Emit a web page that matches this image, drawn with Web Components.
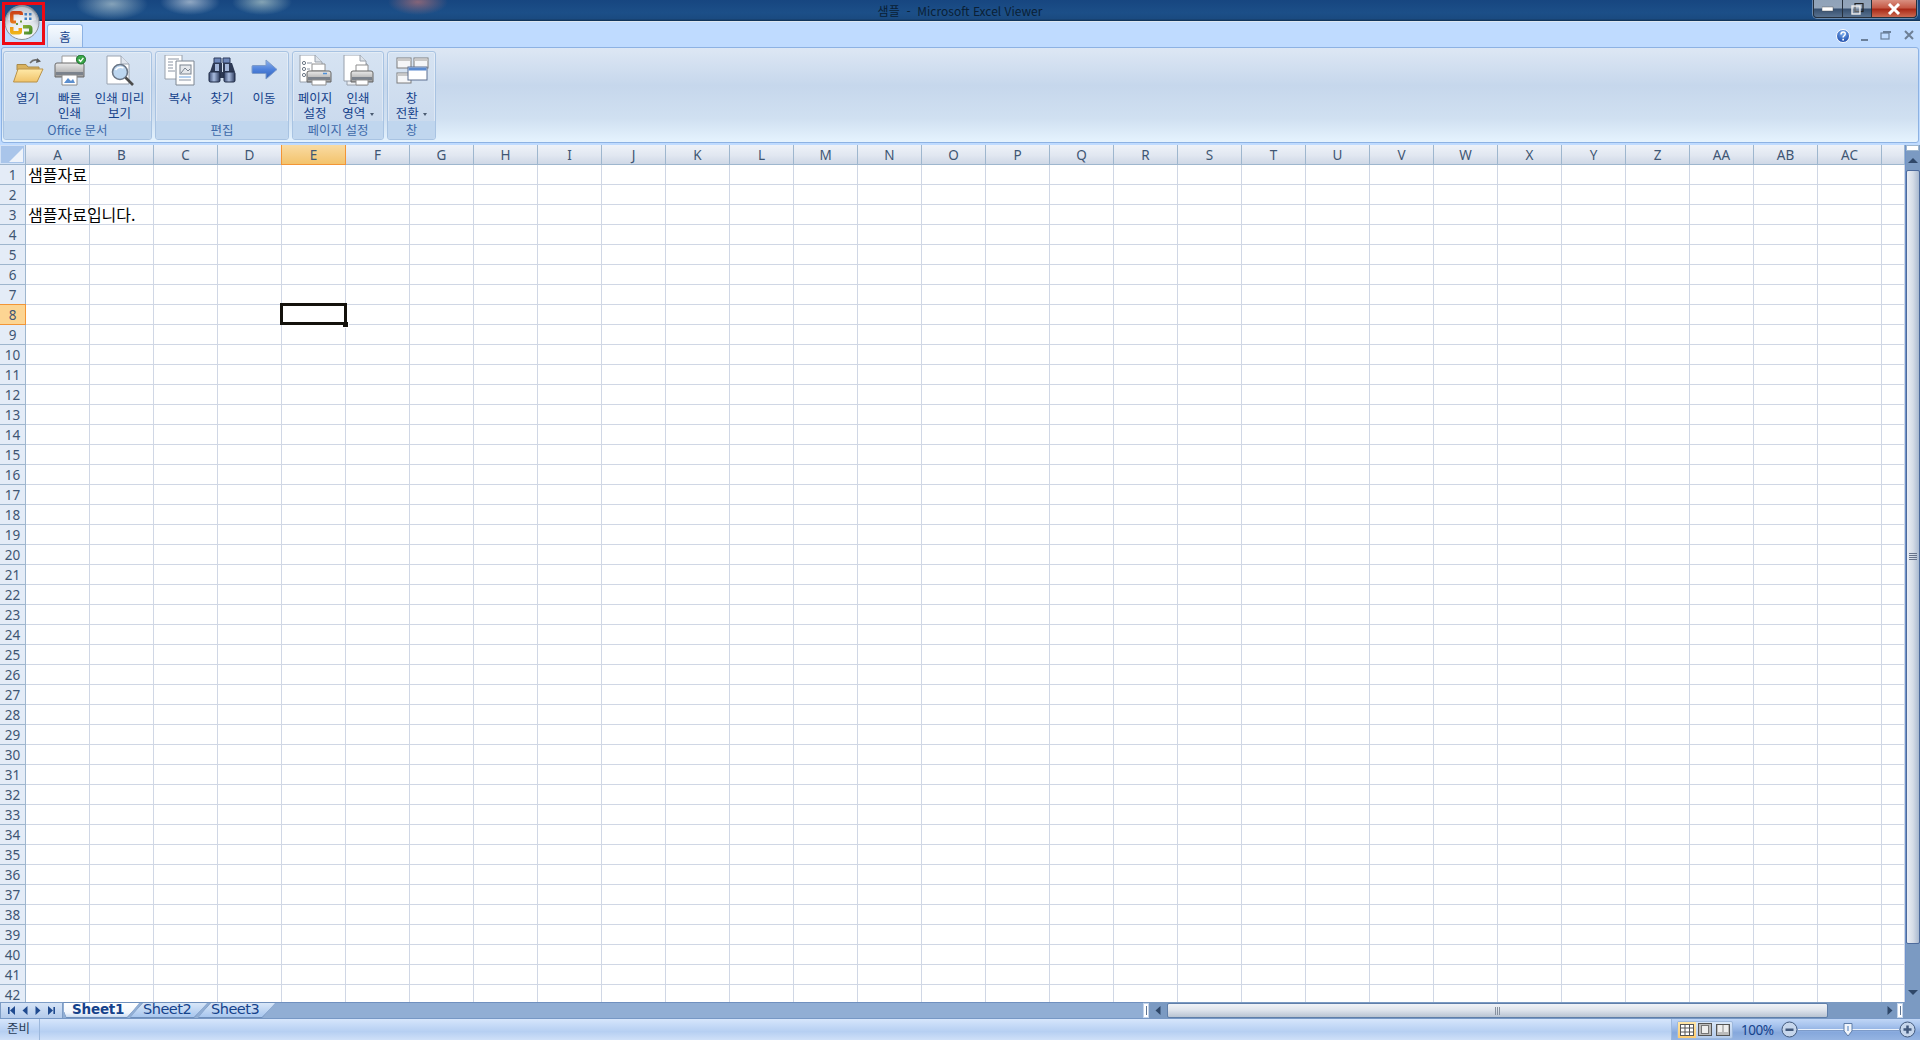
<!DOCTYPE html>
<html lang="ko">
<head>
<meta charset="utf-8">
<title>샘플 - Microsoft Excel Viewer</title>
<style>
  html, body { margin: 0; height: 100%; overflow: hidden; }
  body {
    display: flex;
    flex-direction: column;
    height: 1040px;
    position: relative;
    background: #bfdbff;
    font-family: "Noto Sans CJK KR", "Noto Sans", sans-serif;
  }
</style>
</head>
<body>
  <xl-titlebar>샘플&nbsp; -&nbsp; Microsoft Excel Viewer</xl-titlebar>
  <xl-tabstrip>홈</xl-tabstrip>
  <xl-ribbon>
    <xl-group label="Office 문서" width="149">
      <xl-button icon="open" width="42">열기</xl-button>
      <xl-button icon="quickprint" width="42">빠른<br>인쇄</xl-button>
      <xl-button icon="preview" width="58">인쇄 미리<br>보기</xl-button>
    </xl-group>
    <xl-group label="편집" width="134">
      <xl-button icon="copy" width="44">복사</xl-button>
      <xl-button icon="find" width="40">찾기</xl-button>
      <xl-button icon="goto" width="44">이동</xl-button>
    </xl-group>
    <xl-group label="페이지 설정" width="92">
      <xl-button icon="pagesetup" width="43">페이지<br>설정</xl-button>
      <xl-button icon="printarea" width="43" style="margin-right:3px">인쇄<br>영역 <xl-caret></xl-caret></xl-button>
    </xl-group>
    <xl-group label="창" width="49">
      <xl-button icon="windows" width="45">창<br>전환 <xl-caret></xl-caret></xl-button>
    </xl-group>
  </xl-ribbon>
  <xl-sheet></xl-sheet>
  <xl-sheetbar>
    <xl-sheettab active>Sheet1</xl-sheettab>
    <xl-sheettab>Sheet2</xl-sheettab>
    <xl-sheettab>Sheet3</xl-sheettab>
  </xl-sheetbar>
  <xl-statusbar>준비</xl-statusbar>
  <xl-officebutton></xl-officebutton>

<script>
const icons = {
  open: `
    <path d="M7 9.5 h9 l2 2.5 h11 v3 H7z" fill="#d9b25f" stroke="#a98a4a"/>
    <path d="M3.500 27 L8 14 H33 L27 27z" fill="url(#fold)" stroke="#b8924a"/>
    <path d="M20 8 q4 -5 9 -2" fill="none" stroke="#6f6f6f" stroke-width="1.6"/>
    <path d="M27 3 l4 3.5 -5 1.5z" fill="#5c5c5c"/>`,
  quickprint: `
    <path d="M10 1 h15 v8 H10z" fill="#fff" stroke="#9a9a9a"/>
    <path d="M3 10 q0 -2 2 -2 h25 q2 0 2 2 v12 H3z" fill="url(#metal)" stroke="#6a6a6a"/>
    <rect x="4" y="17" width="27" height="3" fill="#7b828c"/>
    <path d="M10 20 h15 v10 H10z" fill="#fff" stroke="#8a8a8a"/>
    <path d="M12 28 l4 -5 3 3 2 -2 2 4z" fill="#5c8fcf"/>
    <circle cx="29" cy="4.5" r="4.5" fill="#3aa84a" stroke="#1d6d2c"/>
    <path d="M26.8 4.5 l1.8 2 2.8 -3.6" fill="none" stroke="#fff" stroke-width="1.3"/>`,
  preview: `
    <path d="M5 1 h14 l8 8 v20 H5z" fill="#fff" stroke="#9aa3b0"/>
    <path d="M19 1 v8 h8" fill="#dfe5ee" stroke="#9aa3b0"/>
    <circle cx="18" cy="17" r="7.5" fill="#bcd6f0" stroke="#6a7686" stroke-width="1.6"/>
    <path d="M13.5 15 q3 -4 8 -2" fill="none" stroke="#fff" stroke-width="1.5"/>
    <path d="M23.5 22.5 L31 30" stroke="#4c4c4c" stroke-width="2.6"/>`,
  copy: `
    <path d="M3 0 h17 v24 H3z" fill="#fff" stroke="#98a0ab"/>
    <path d="M6 4 h11 M6 7 h5 M6 10 h5 M6 13 h5 M6 16 h7" stroke="#8a94a3"/>
    <path d="M14 6 h18 v24 H14z" fill="#fdfdfd" stroke="#7d8692"/>
    <rect x="18" y="10" width="11" height="9" fill="#e5e8ec" stroke="#7a8490"/>
    <path d="M19 18 l4 -5 3 3 2 -2" fill="none" stroke="#7a8490"/>
    <path d="M17 22 h12" stroke="#6ba0dc"/><path d="M17 25 h12" stroke="#8a94a3"/>`,
  find: `
    <path d="M10 3 h7 v5 h-7z M19 3 h7 v5 h-7z" fill="#6d86b8" stroke="#2c3a5c"/>
    <path d="M9 8 h9 v9 h1 v-9 h9 l3 9 H6z" fill="#2e3a55"/>
    <rect x="11" y="9" width="4" height="7" fill="#a3b6d9"/><rect x="21" y="9" width="4" height="7" fill="#a3b6d9"/>
    <path d="M15 17 h6 v6 h-6z" fill="#2e3a55"/>
    <rect x="5" y="17" width="11" height="10" rx="1.5" fill="url(#barrel)" stroke="#1f2a44"/>
    <rect x="20" y="17" width="11" height="10" rx="1.5" fill="url(#barrel)" stroke="#1f2a44"/>`,
  goto: `
    <path d="M7 10.500 H20 V5 L31 14.500 20 24 V18.500 H7 q-1 0 -1 -1 V11.500 q0 -1 1 -1z" fill="url(#arrow)" stroke="#7d9bc9"/>`,
  pagesetup: `
    <path d="M3 0 h15 l7 7 v20 H3z" fill="#fff" stroke="#98a0ab"/>
    <path d="M18 0 v7 h7" fill="#dde3ea" stroke="#98a0ab"/>
    <g fill="#fff" stroke="#6f7a88"><circle cx="7" cy="8" r="1.6"/><circle cx="7" cy="14" r="1.6"/><circle cx="7" cy="20" r="1.6"/></g>
    <path d="M10 8 h5 M10 14 h3 M10 20 h3" stroke="#8a94a3"/>
    <path d="M15 9 h13 v7 H15z" fill="#fff" stroke="#8f8f8f"/>
    <path d="M10 18 q0 -2 2 -2 h20 q2 0 2 2 v9 H10z" fill="url(#metal)" stroke="#666"/>
    <rect x="11" y="22" width="22" height="3" fill="#7b828c"/>
    <path d="M15 25 h14 v5 H15z" fill="#fff" stroke="#8f8f8f"/>
    <path d="M26 18.500 h4" stroke="#4d8fd8" stroke-width="1.4"/>`,
  printarea: `
    <path d="M7 3 h14 l6 6 v21 H7z" fill="#eceff3" stroke="#98a0ab"/>
    <path d="M4 0 h16 l6 6 v20 H4z" fill="#fff" stroke="#98a0ab"/>
    <path d="M20 0 v6 h6" fill="#dde3ea" stroke="#98a0ab"/>
    <path d="M16 10 h12 v7 H16z" fill="#fff" stroke="#8f8f8f"/>
    <path d="M11 18 q0 -2 2 -2 h18 q2 0 2 2 v9 H11z" fill="url(#metal)" stroke="#666"/>
    <rect x="12" y="22" width="20" height="3" fill="#7b828c"/>
    <path d="M16 25 h12 v5 H16z" fill="#fff" stroke="#8f8f8f"/>`,
  windows: `
    <g transform="translate(2 1)">
      <g fill="#f5f6f8" stroke="#7d7d7d">
        <rect x="1" y="2" width="14" height="10"/><rect x="18" y="2" width="14" height="10"/>
        <rect x="1" y="17" width="14" height="10"/>
      </g>
      <g fill="#c9c9c9"><rect x="1.500" y="2.500" width="13" height="2.500"/><rect x="18.500" y="2.500" width="13" height="2.500"/><rect x="1.500" y="17.500" width="13" height="2.500"/></g>
      <rect x="12" y="11" width="19" height="13" fill="#fff" stroke="#5d6f8f"/>
      <rect x="12.500" y="11.500" width="18" height="3" fill="#5a8ad0"/>
    </g>`
};

const iconDefs = `
  <defs>
    <linearGradient id="fold" x1="0" y1="0" x2="0" y2="1"><stop offset="0" stop-color="#ffe9a8"/><stop offset="1" stop-color="#f0c36a"/></linearGradient>
    <linearGradient id="metal" x1="0" y1="0" x2="0" y2="1"><stop offset="0" stop-color="#eaeaea"/><stop offset="1" stop-color="#9a9a9a"/></linearGradient>
    <linearGradient id="barrel" x1="0" y1="0" x2="1" y2="0"><stop offset="0" stop-color="#3a4a70"/><stop offset=".45" stop-color="#a9bcdf"/><stop offset="1" stop-color="#2c3a5c"/></linearGradient>
    <linearGradient id="arrow" x1="0" y1="0" x2="0" y2="1"><stop offset="0" stop-color="#8fb2ea"/><stop offset=".5" stop-color="#4f82dc"/><stop offset="1" stop-color="#2f5fb8"/></linearGradient>
  </defs>`;

class XlTitlebar extends HTMLElement {
  constructor() {
    super();
    this.attachShadow({ mode: "open" });
    this.shadowRoot.innerHTML = `
      <style>
        :host {
          display: flex;
          align-items: flex-start;
          justify-content: center;
          height: 22px;
          box-sizing: border-box;
          border-bottom: 1px solid #dce6f0;
          position: relative;
          font-size: 12px;
          line-height: 22px;
          color: #0a1f35;
          background:
            radial-gradient(ellipse 36px 16px at 112px 4px, rgba(205,222,222,.6), transparent),
            radial-gradient(ellipse 30px 13px at 190px 2px, rgba(225,232,238,.6), transparent),
            radial-gradient(ellipse 30px 13px at 262px 2px, rgba(205,225,215,.6), transparent),
            radial-gradient(ellipse 30px 13px at 418px 2px, rgba(205,120,115,.6), transparent),
            linear-gradient(#174680, #1c4f88 60%, #1a4a80 90%, #0f2f50);
        }
        .controls {
          position: absolute;
          top: 0;
          right: 3px;
          display: flex;
          height: 18px;
          width: 104px;
          box-sizing: border-box;
          border: 1px solid #26303c;
          border-top: 0;
          border-radius: 0 0 4px 4px;
          overflow: hidden;
          box-shadow: 0 0 0 1px rgba(255,255,255,.35);
        }
        .controls div { display: flex; align-items: center; justify-content: center; }
        .min, .max {
          width: 28px;
          background: linear-gradient(#8fa2b8, #93a5ba 45%, #37506f 55%, #59728f);
          border-right: 1px solid #26303c;
        }
        .close { flex: 1; background: linear-gradient(#d98f80, #c65a47 45%, #a92a18 55%, #cc6a52); }
      </style>
      <slot></slot>
      <div class="controls">
        <div class="min"><svg width="12" height="6"><rect width="11" height="4" y="1" fill="#fff" stroke="#444" stroke-width=".4"/></svg></div>
        <div class="max"><svg width="13" height="12"><rect x="4" y=".5" width="8" height="8" fill="none" stroke="#222" stroke-width="1.2"/><rect x="1" y="3" width="8" height="8" fill="rgba(255,255,255,.3)" stroke="#eee" stroke-width="1.4"/></svg></div>
        <div class="close"><svg width="14" height="12"><path d="M2 1 L12 11 M12 1 L2 11" stroke="#fff" stroke-width="3"/></svg></div>
      </div>`;
  }
}

class XlTabstrip extends HTMLElement {
  constructor() {
    super();
    this.attachShadow({ mode: "open" });
    this.shadowRoot.innerHTML = `
      <style>
        :host {
          display: flex;
          height: 25px;
          padding-left: 47px;
          box-sizing: border-box;
          position: relative;
          background: #bfdbff;
        }
        .tab {
          width: 36px;
          height: 23px;
          margin-top: 2px;
          box-sizing: border-box;
          border: 1px solid #8db2e3;
          border-bottom: 0;
          border-radius: 3px 3px 0 0;
          background: linear-gradient(#f7fbff, #dae7f6);
          color: #15428b;
          font-size: 12.5px;
          line-height: 23px;
          text-align: center;
        }
        .ctl { position: absolute; top: 6px; }
      </style>
      <div class="tab"><slot></slot></div>
      <svg class="ctl" style="left:1835px" width="16" height="16">
        <defs><radialGradient id="h" cx=".5" cy=".3" r=".7"><stop offset="0" stop-color="#7fb2f0"/><stop offset="1" stop-color="#1746a8"/></radialGradient></defs>
        <circle cx="8" cy="8" r="6.500" fill="url(#h)" stroke="#fff"/>
        <path d="M6 6.500 q0 -2.500 2.200 -2.500 q2.300 0 2 2.200 q-.2 1 -1.200 1.600 q-.9 .5 -.9 1.700" fill="none" stroke="#fff" stroke-width="1.500"/>
        <rect x="7.300" y="10.800" width="1.700" height="1.700" fill="#fff"/>
      </svg>
      <svg class="ctl" style="left:1860px" width="10" height="16"><rect x="1" y="11" width="7" height="2" fill="#6a7f99"/></svg>
      <svg class="ctl" style="left:1880px" width="12" height="16"><rect x="1" y="5" width="8" height="6" fill="none" stroke="#6a7f99" stroke-width="1.200"/><rect x="3" y="3" width="8" height="2" fill="#6a7f99"/></svg>
      <svg class="ctl" style="left:1903px" width="12" height="16"><path d="M2 3 L10 11 M10 3 L2 11" stroke="#6d7f95" stroke-width="2"/></svg>`;
  }
}

class XlRibbon extends HTMLElement {
  constructor() {
    super();
    this.attachShadow({ mode: "open" });
    this.shadowRoot.innerHTML = `
      <style>
        :host {
          display: block;
          height: 98px;
          background: #bfdbff;
          padding: 0 1px 2px 1px;
          box-sizing: border-box;
        }
        .panel {
          display: flex;
          gap: 3px;
          height: 96px;
          box-sizing: border-box;
          padding: 3px 2px 2px 1px;
          border: 1px solid #8db2e3;
          border-radius: 3px;
          background: linear-gradient(#dde7f4, #c6d7ec 40%, #d0e0f1 75%, #e5f3fe);
        }
      </style>
      <div class="panel"><slot></slot></div>`;
  }
}

class XlGroup extends HTMLElement {
  connectedCallback() {
    if (this.shadowRoot) return;
    this.attachShadow({ mode: "open" });
    const width = this.getAttribute("width");
    this.shadowRoot.innerHTML = `
      <style>
        :host {
          display: flex;
          flex-direction: column;
          width: ${width}px;
          box-sizing: border-box;
          border: 1px solid #a8c3e2;
          border-radius: 3px;
          box-shadow: inset 0 0 0 1px rgba(255,255,255,.35);
          background: linear-gradient(#d6e3f2, #c8d8ec);
          overflow: hidden;
        }
        .body { display: flex; justify-content: center; flex: 1; padding-top: 3px; }
        .label {
          height: 18px;
          background: #c0d6ee;
          color: #3e6aaa;
          font-size: 12.5px;
          line-height: 18px;
          text-align: center;
          white-space: nowrap;
        }
      </style>
      <div class="body"><slot></slot></div>
      <div class="label">${this.getAttribute("label")}</div>`;
  }
}

class XlButton extends HTMLElement {
  connectedCallback() {
    if (this.shadowRoot) return;
    this.attachShadow({ mode: "open" });
    const width = this.getAttribute("width");
    const icon = this.getAttribute("icon");
    this.shadowRoot.innerHTML = `
      <style>
        :host {
          display: flex;
          flex-direction: column;
          align-items: center;
          width: ${width}px;
          color: #15428b;
          font-size: 12.5px;
          line-height: 15px;
          text-align: center;
          white-space: nowrap;
        }
        svg { display: block; margin-bottom: 4px; }
      </style>
      <svg width="36" height="31" viewBox="0 0 36 31">${iconDefs}${icons[icon]}</svg>
      <div><slot></slot></div>`;
  }
}

class XlCaret extends HTMLElement {
  constructor() {
    super();
    this.attachShadow({ mode: "open" });
    this.shadowRoot.innerHTML = `
      <style>
        :host {
          display: inline-block;
          width: 0;
          height: 0;
          margin-left: 1px;
          vertical-align: middle;
          border: 2.500px solid transparent;
          border-top: 3px solid #4a5a70;
          border-bottom: 0;
        }
      </style>`;
  }
}

class XlSheet extends HTMLElement {
  colName(i) {
    const letters = "ABCDEFGHIJKLMNOPQRSTUVWXYZ";
    return i < 26 ? letters[i] : "A" + letters[i - 26];
  }

  connectedCallback() {
    if (this.shadowRoot) return;
    this.attachShadow({ mode: "open" });
    const data = { "0,1": "샘플자료", "0,3": "샘플자료입니다." };
    let head = `<div class="corner"><i></i></div>`;
    for (let c = 0; c < 29; c++) {
      head += `<div class="ch${c === 4 ? " on" : ""}">${this.colName(c)}</div>`;
    }
    head += `<div class="ch rest"></div>`;
    let rows = "";
    for (let r = 1; r <= 42; r++) {
      rows += `<div class="rh${r === 8 ? " on" : ""}">${r}</div>`;
      for (let c = 0; c < 30; c++) {
        const selected = c === 4 && r === 8;
        rows += `<div class="cell${selected ? " sel" : ""}">${data[c + "," + r] || ""}</div>`;
      }
    }
    this.shadowRoot.innerHTML = `
      <style>
        :host {
          display: flex;
          height: 857px;
          overflow: hidden;
          background: #fff;
        }
        .grid {
          flex: 1;
          display: grid;
          grid-template-columns: 26px repeat(29, 64px) 1fr;
          grid-auto-rows: 20px;
          overflow: hidden;
          height: 857px;
          font-size: 13.5px;
        }
        .corner {
          background: #a9c5ea;
          border-right: 1px solid #9eb6ce;
          border-bottom: 1px solid #9eb6ce;
          box-shadow: inset 0 0 0 1px #d3e2f6;
          position: relative;
        }
        .corner i {
          position: absolute;
          right: 2px;
          bottom: 2px;
          border: 7px solid transparent;
          border-right-color: #eef3fa;
          border-bottom-color: #eef3fa;
        }
        .ch, .rh {
          display: flex;
          align-items: center;
          justify-content: center;
          box-sizing: border-box;
          color: #3f5673;
          font-family: "Noto Sans", sans-serif;
        }
        .ch {
          background: linear-gradient(#eef2f8, #e1e7f1 55%, #cfd8e6);
          border-right: 1px solid #9eb6ce;
          border-bottom: 1px solid #9eb6ce;
        }
        .ch.on {
          background: linear-gradient(#f9dba3, #f3c36c);
          border-bottom-color: #f29536;
          border-right-color: #f29536;
          box-shadow: -1px 0 0 #f29536;
        }
        .rh {
          background: #e4ecf7;
          border-right: 1px solid #9eb6ce;
          border-bottom: 1px solid #9eb6ce;
        }
        .rh.on {
          background: #fcd593;
          border-right-color: #f29536;
          border-bottom-color: #f29536;
          box-shadow: 0 -1px 0 #f29536;
        }
        .cell {
          box-sizing: border-box;
          border-right: 1px solid #d0d7e5;
          border-bottom: 1px solid #d0d7e5;
          padding-left: 2px;
          font: 16px/19px "Noto Sans CJK KR", sans-serif;
          color: #000;
          white-space: nowrap;
        }
        .cell.sel { position: relative; }
        .cell.sel::before {
          content: "";
          position: absolute;
          left: -2px;
          top: -2px;
          width: 67px;
          height: 22px;
          box-sizing: border-box;
          border: 3px solid #14120c;
        }
        .cell.sel::after {
          content: "";
          position: absolute;
          left: 61px;
          top: 17px;
          width: 5px;
          height: 5px;
          background: #14120c;
          border: 1px solid #fff;
          border-top: 0;
          border-left: 0;
        }
        .vbar {
          width: 15px;
          flex: none;
          display: flex;
          flex-direction: column;
          align-items: stretch;
          background: #7b9ac2;
          border-left: 1px solid #6f93cc;
          box-sizing: border-box;
        }
        .split { height: 6px; background: #fff; border: 1px solid #9eb6ce; box-sizing: border-box; margin-right: 1px; }
        .up, .down { display: flex; align-items: center; justify-content: center; }
        .up { height: 19px; }
        .thumb {
          height: 774px;
          display: flex;
          align-items: center;
          justify-content: center;
          box-sizing: border-box;
          border: 1px solid #4e6b9c;
          border-radius: 2px;
          background: linear-gradient(90deg, #eaeef5, #d5dce7 50%, #a9b9d0);
        }
        .grip { width: 8px; height: 8px; background: repeating-linear-gradient(#66728a 0 1px, transparent 1px 2px); }
        .down { flex: 1; align-items: flex-end; padding-bottom: 6px; }
      </style>
      <div class="grid">${head}${rows}</div>
      <div class="vbar">
        <div class="split"></div>
        <div class="up"><svg width="10" height="6"><path d="M5 0 L10 5 H0z" fill="#2f4768"/></svg></div>
        <div class="thumb"><div class="grip"></div></div>
        <div class="down"><svg width="10" height="6"><path d="M0 0 H10 L5 5z" fill="#2f4768"/></svg></div>
      </div>`;
  }
}

class XlSheetbar extends HTMLElement {
  constructor() {
    super();
    this.attachShadow({ mode: "open" });
    this.shadowRoot.innerHTML = `
      <style>
        :host {
          display: flex;
          height: 16px;
          background: #91aed4;
          box-shadow: inset 0 1px 0 #7090bf;
          position: relative;
        }
        .nav {
          width: 63px;
          flex: none;
          box-sizing: border-box;
          border: 1px solid #7d9cc5;
          border-bottom: 0;
          background: linear-gradient(#d6e4f7, #b4cbeb);
          display: flex;
          align-items: center;
          justify-content: space-around;
          padding: 0 4px;
        }
        .tabs { display: flex; margin-left: 1px; }
        .spacer { flex: 1; }
        .hs { display: flex; height: 16px; flex: none; background: #7b9ac2; width: 777px; margin-left: 0; }
        .handle {
          width: 6px;
          height: 15px;
          flex: none;
          margin-top: 1px;
          background: #fff;
          border: 1px solid #c4d4ea;
          box-sizing: border-box;
          display: flex;
          justify-content: center;
        }
        .handle i { width: 1px; margin: 2px 0; background: #5f7694; }
        .arrow { display: flex; align-items: center; justify-content: center; flex: none; }
        .thumb {
          width: 661px;
          flex: none;
          margin-top: 1px;
          box-sizing: border-box;
          border: 1px solid #5f7ea9;
          border-radius: 2px;
          background: linear-gradient(#f0f3f7, #dfe4ec 45%, #b8c3d2);
          display: flex;
          align-items: center;
          justify-content: center;
        }
        .grip { width: 6px; height: 8px; background: repeating-linear-gradient(90deg, #87919f 0 1px, transparent 1px 2px); }
      </style>
      <div class="nav">
        <svg width="8" height="9"><rect y="1" width="1.600" height="7" fill="#1f4a8f"/><path d="M7 0 V9 L2 4.500z" fill="#1f4a8f"/></svg>
        <svg width="6" height="9"><path d="M5.500 0 V9 L.5 4.500z" fill="#1f4a8f"/></svg>
        <svg width="6" height="9"><path d="M.5 0 V9 L5.500 4.500z" fill="#1f4a8f"/></svg>
        <svg width="8" height="9"><path d="M1 0 V9 L6 4.500z" fill="#1f4a8f"/><rect x="6.400" y="1" width="1.600" height="7" fill="#1f4a8f"/></svg>
      </div>
      <div class="tabs"><slot></slot></div>
      <div class="spacer"></div>
      <div class="hs">
        <div class="handle"><i></i></div>
        <div class="arrow" style="width:18px"><svg width="6" height="9"><path d="M5.500 0 V9 L.5 4.500z" fill="#2f4768"/></svg></div>
        <div class="thumb"><div class="grip"></div></div>
        <div class="spacer"></div>
        <div class="arrow" style="width:14px"><svg width="6" height="9"><path d="M.5 0 V9 L5.500 4.500z" fill="#2f4768"/></svg></div>
        <div class="handle" style="margin-right:17px"><i></i></div>
      </div>`;
  }
}

class XlSheettab extends HTMLElement {
  connectedCallback() {
    if (this.shadowRoot) return;
    this.attachShadow({ mode: "open" });
    const active = this.hasAttribute("active");
    const shape = active
      ? "polygon(0 0, 100% 0, 83% 100%, 3% 100%, 0 60%)"
      : "polygon(13px 0, 100% 0, calc(100% - 14px) 100%, 0 100%)";
    this.shadowRoot.innerHTML = `
      <style>
        :host {
          display: block;
          box-sizing: border-box;
          height: 16px;
          margin-left: ${active ? "0" : "-10px"};
          width: ${active ? "76px" : "78px"};
          padding-top: 1px;
          ${active ? "position: relative; z-index: 1;" : ""}
          background: #6f8fbb;
          clip-path: ${shape};
        }
        .in {
          height: 14px;
          padding-left: ${active ? "8px" : "13px"};
          box-sizing: border-box;
          clip-path: ${shape};
          background: ${active ? "linear-gradient(#fff, #f2f6fc 70%, #c9dbf3)" : "linear-gradient(#d9e7f8, #a8c6ee)"};
          color: #15428b;
          font: ${active ? "bold 13.5px" : "14.5px"}/12px "DejaVu Sans", sans-serif;
          ${active ? "letter-spacing: -.2px;" : "letter-spacing: -.5px;"}
          white-space: nowrap;
        }
      </style>
      <div class="in"><slot></slot></div>`;
  }
}

class XlStatusbar extends HTMLElement {
  constructor() {
    super();
    this.attachShadow({ mode: "open" });
    this.shadowRoot.innerHTML = `
      <style>
        :host {
          display: flex;
          height: 22px;
          box-sizing: border-box;
          border-top: 1px solid #7798c5;
          background: linear-gradient(#d7e6fb, #c8dcf8 25%, #b6cff2 60%, #cfe0f8);
          color: #15428b;
          font-size: 12.5px;
          line-height: 18px;
        }
        .left {
          width: 40px;
          flex: none;
          box-sizing: border-box;
          padding-left: 7px;
          border-right: 1px solid #9db8dc;
          color: #2a3d58;
        }
        .mid { flex: 1; }
        .right {
          width: 249px;
          flex: none;
          display: flex;
          align-items: center;
          box-sizing: border-box;
          padding-left: 5px;
          border-left: 1px solid #9db8dc;
          background: linear-gradient(#c0d6f6, #a8c4ee 30%, #86a8dc 65%, #95b4e2);
        }
        .views {
          display: flex;
          width: 56px;
          height: 18px;
          box-sizing: border-box;
          border: 1px solid #9db8dc;
          border-radius: 2px;
          background: linear-gradient(#d8e6f8, #b4cbec);
        }
        .views span { flex: 1; display: flex; align-items: center; justify-content: center; }
        .views .on { background: linear-gradient(#ffe7a8, #fdcb6e); }
        .pct {
          width: 40px;
          margin-left: 8px;
          font: 13.5px/20px "Noto Sans", sans-serif;
          letter-spacing: -.5px;
        }
        .zoom { display: flex; align-items: center; flex: 1; margin-right: 4px; }
        .line { flex: 1; height: 1px; background: #eaf2fc; box-shadow: 0 1px 0 #7d9bc9; position: relative; }
        .knob { position: absolute; left: 45px; top: -6px; }
      </style>
      <div class="left"><slot></slot></div>
      <div class="mid"></div>
      <div class="right">
        <div class="views">
          <span class="on"><svg width="14" height="12"><rect x=".5" y=".5" width="13" height="11" fill="#fff" stroke="#555"/><path d="M.5 4 H13 M.5 8 H13 M5 .5 V11 M9.500 .5 V11" stroke="#555"/></svg></span>
          <span><svg width="14" height="13"><rect x=".5" y=".5" width="13" height="12" fill="#bbb" stroke="#555"/><rect x="3.500" y="2.500" width="7" height="8" fill="#eee" stroke="#777"/></svg></span>
          <span><svg width="14" height="12"><rect x=".5" y=".5" width="13" height="11" fill="#bbb" stroke="#555"/><path d="M2 1 V8 H6 V1z M8 1 V8 H12 V1z" fill="#eee"/></svg></span>
        </div>
        <div class="pct">100%</div>
        <div class="zoom">
          <svg width="17" height="17"><circle cx="8.500" cy="8.500" r="7.500" fill="#c6d6ec" stroke="#42597c"/><rect x="4.500" y="7.500" width="8" height="2.500" fill="#42597c"/></svg>
          <div class="line">
            <svg class="knob" width="10" height="14"><path d="M1 .5 H9 V8 L5 13 1 8z" fill="#f1f5fb" stroke="#5f7ea9"/><rect x="4" y="3" width="2" height="5" fill="#9db8dc"/></svg>
          </div>
          <svg width="17" height="17"><circle cx="8.500" cy="8.500" r="7.500" fill="#c6d6ec" stroke="#42597c"/><path d="M4.500 8.500 H12.500 M8.500 4.500 V12.500" stroke="#42597c" stroke-width="2.500"/></svg>
        </div>
      </div>`;
  }
}

class XlOfficebutton extends HTMLElement {
  constructor() {
    super();
    this.attachShadow({ mode: "open" });
    this.shadowRoot.innerHTML = `
      <style>
        :host {
          position: absolute;
          left: 2px;
          top: 2px;
          width: 43px;
          height: 43px;
          box-sizing: border-box;
          border: 3px solid #ee0a14;
        }
        svg { display: block; }
      </style>
      <svg width="37" height="37" viewBox="0 0 37 37">
        <defs>
          <radialGradient id="ob" cx=".5" cy=".85" r=".8"><stop offset="0" stop-color="#fff"/><stop offset=".6" stop-color="#dfe3ea"/><stop offset="1" stop-color="#8d97a6"/></radialGradient>
          <linearGradient id="red" x1="0" y1="0" x2="0" y2="1"><stop offset="0" stop-color="#c93d18"/><stop offset="1" stop-color="#e87a18"/></linearGradient>
          <linearGradient id="yel" x1="0" y1="0" x2="0" y2="1"><stop offset="0" stop-color="#f09a14"/><stop offset="1" stop-color="#eeb81a"/></linearGradient>
          <linearGradient id="grn" x1="0" y1="0" x2="1" y2="1"><stop offset="0" stop-color="#8fb238"/><stop offset="1" stop-color="#3a862a"/></linearGradient>
        </defs>
        <circle cx="17" cy="17.500" r="17" fill="url(#ob)" stroke="#8a9098"/>
        <path d="M3 15 a14 13 0 0 1 28 0 q-14 5 -28 0z" fill="#fff" opacity=".4"/>
        <path d="M5 9 q0 -3 3 -3 h7 q3 0 3 3 v1 h-3.500 v-.5 h-6 v6 h2.500 v3 H8 q-3 0 -3 -3z" fill="url(#red)"/>
        <path d="M5 22 h3.500 v4 h5 v-3 H17 v3.500 q0 3 -3 3 H8 q-3 0 -3 -3z" fill="url(#yel)"/>
        <path d="M18 20 h6 q3.500 0 3.500 3.500 v3 q0 3 -3 3 H19 v-3 h5 v-3 h-6z" fill="url(#grn)"/>
        <g fill="#3f7fc2"><rect x="19.500" y="8" width="2.500" height="2.500"/><rect x="24" y="8" width="2.500" height="2.500"/><rect x="19.500" y="12.500" width="2.500" height="2.500"/><rect x="24" y="12.500" width="2.500" height="2.500"/></g>
        <g fill="#6f9a3c"><rect x="11" y="18" width="2" height="2"/><rect x="15" y="15.500" width="2" height="2"/></g>
      </svg>`;
  }
}

customElements.define("xl-titlebar", XlTitlebar);
customElements.define("xl-tabstrip", XlTabstrip);
customElements.define("xl-ribbon", XlRibbon);
customElements.define("xl-group", XlGroup);
customElements.define("xl-button", XlButton);
customElements.define("xl-caret", XlCaret);
customElements.define("xl-sheet", XlSheet);
customElements.define("xl-sheetbar", XlSheetbar);
customElements.define("xl-sheettab", XlSheettab);
customElements.define("xl-statusbar", XlStatusbar);
customElements.define("xl-officebutton", XlOfficebutton);
</script>
</body>
</html>
